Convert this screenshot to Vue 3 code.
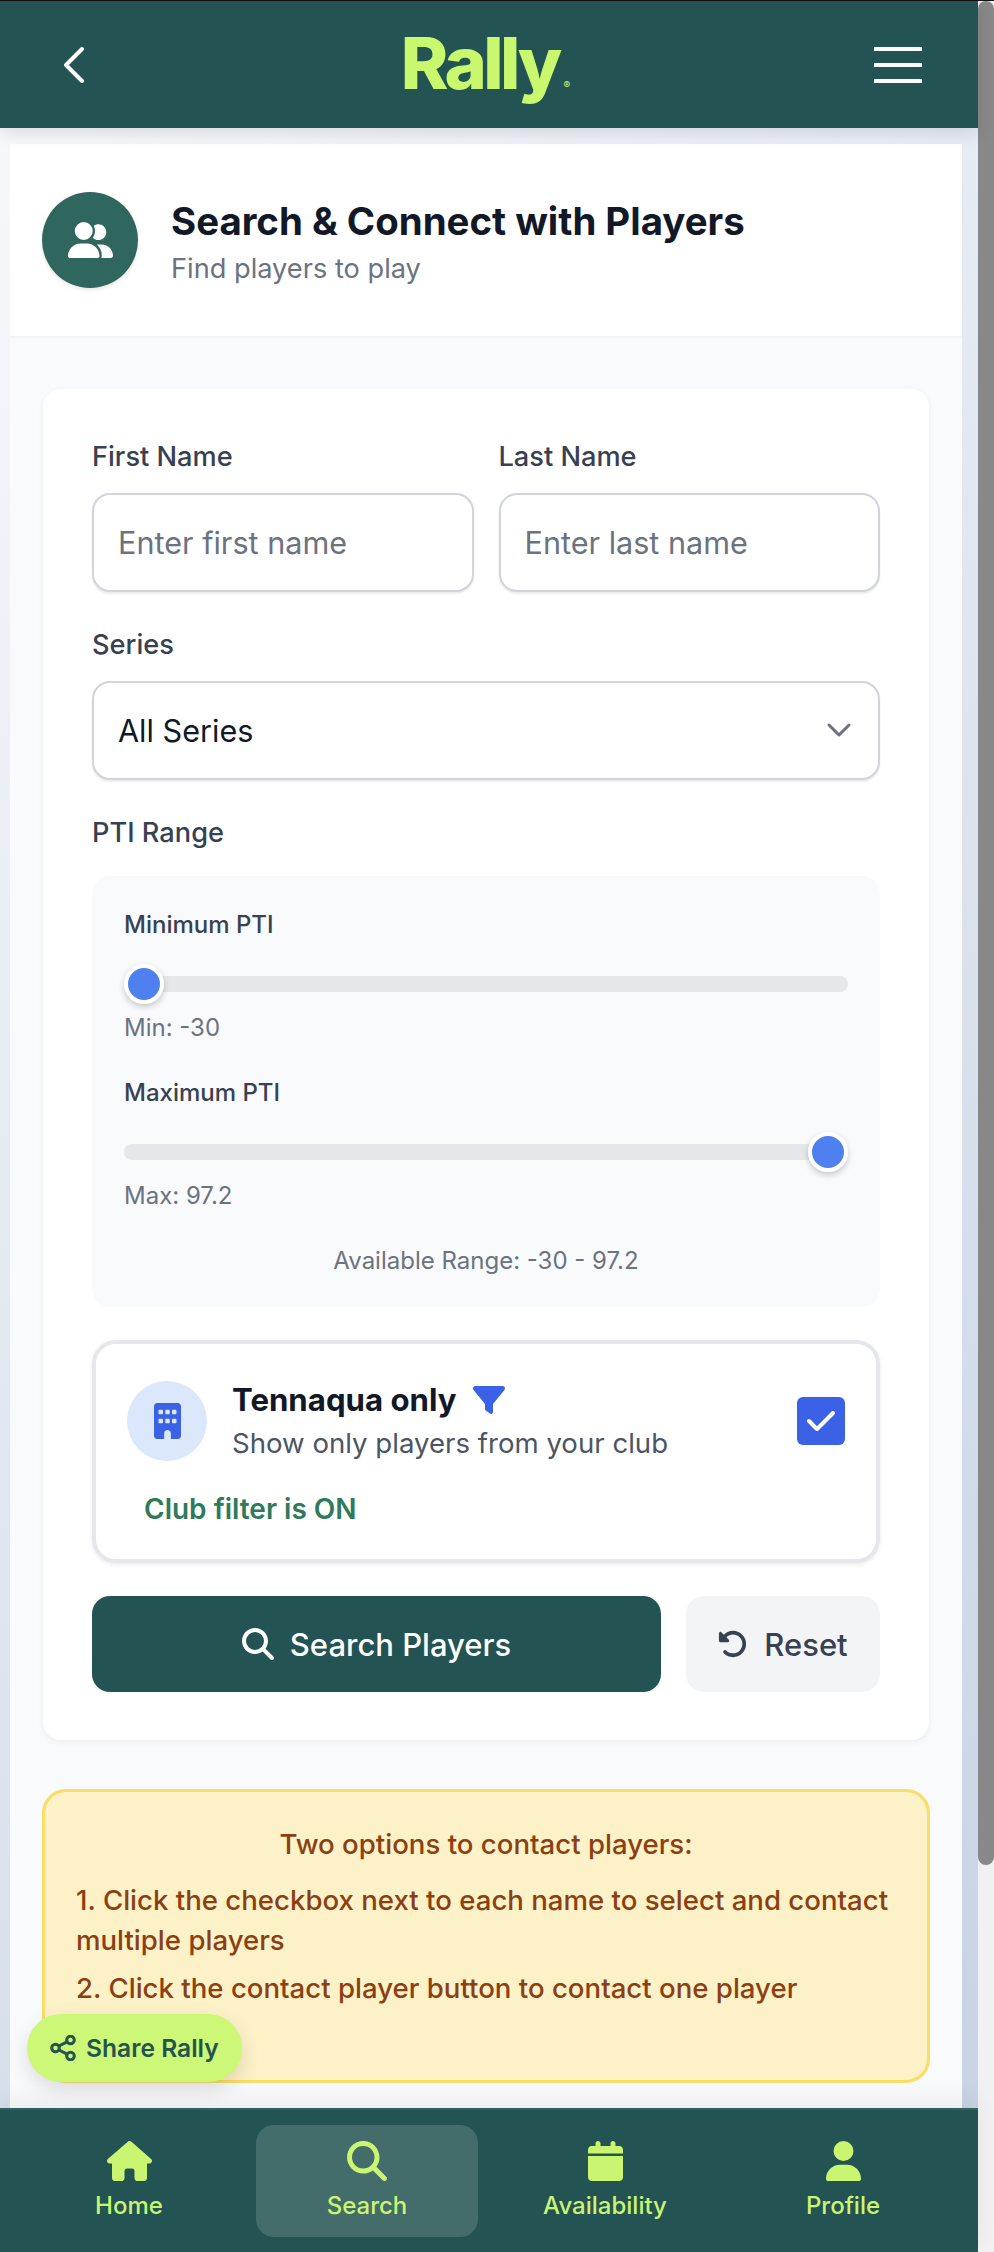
<template>
  <div class="screen">
    <div class="page">
      <header class="topbar">
        <button class="back" aria-label="Back">
          <svg viewBox="0 0 22 38" width="22" height="38" fill="none" stroke="#fff" stroke-width="4" stroke-linecap="round" stroke-linejoin="round">
            <path d="M19 3 3 19l16 16" />
          </svg>
        </button>
        <div class="logo">Rally<span class="reg">®</span></div>
        <button class="burger" aria-label="Menu"><i></i><i></i><i></i></button>
      </header>

      <main class="content">
        <section class="page-head">
          <div class="head-icon">
            <svg viewBox="0 0 640 512" width="45" height="36" fill="#fff"><path :d="icons.users" /></svg>
          </div>
          <div class="head-text">
            <h1>Search &amp; Connect with Players</h1>
            <p>Find players to play</p>
          </div>
        </section>

        <div class="body">
          <form class="card" @submit.prevent>
            <div class="name-row">
              <div>
                <label>First Name</label>
                <input v-model="firstName" type="text" placeholder="Enter first name">
              </div>
              <div>
                <label>Last Name</label>
                <input v-model="lastName" type="text" placeholder="Enter last name">
              </div>
            </div>

            <label class="spaced">Series</label>
            <div class="select-wrap">
              <select v-model="series">
                <option>All Series</option>
              </select>
              <svg class="chevron" viewBox="0 0 24 15" width="24" height="15" fill="none" stroke="#6b7280" stroke-width="3" stroke-linecap="round" stroke-linejoin="round">
                <path d="m2 2 10 10L22 2" />
              </svg>
            </div>

            <label class="spaced pti-label">PTI Range</label>
            <div class="range-box">
              <div class="range-title">Minimum PTI</div>
              <input v-model="minPti" type="range" min="-30" max="97.2" step="0.1">
              <div class="range-value">Min: {{ minPti }}</div>
              <div class="range-title second">Maximum PTI</div>
              <input v-model="maxPti" type="range" min="-30" max="97.2" step="0.1">
              <div class="range-value">Max: {{ maxPti }}</div>
              <div class="range-note">Available Range: -30 - 97.2</div>
            </div>

            <div class="club-box">
              <div class="club-row">
                <div class="club-icon">
                  <svg viewBox="0 0 384 512" width="27" height="36" fill="#3b62e6"><path :d="icons.building" /></svg>
                </div>
                <div class="club-text">
                  <div class="club-title">
                    Tennaqua only
                    <svg viewBox="0 0 512 512" width="32" height="32" fill="#3b62e6"><path :d="icons.filter" /></svg>
                  </div>
                  <div class="club-sub">Show only players from your club</div>
                </div>
                <button class="checkbox" type="button" @click="clubOnly = !clubOnly">
                  <svg v-if="clubOnly" viewBox="0 0 448 512" width="28" height="32" fill="#fff"><path :d="icons.check" /></svg>
                </button>
              </div>
              <div class="club-status">Club filter is {{ clubOnly ? 'ON' : 'OFF' }}</div>
            </div>

            <div class="actions">
              <button class="btn-search">
                <svg viewBox="0 0 512 512" width="32" height="32" fill="#fff"><path :d="icons.search" /></svg>
                Search Players
              </button>
              <button class="btn-reset" type="button">
                <svg viewBox="0 0 512 512" width="30" height="30" fill="#374151"><path :d="icons.undo" /></svg>
                Reset
              </button>
            </div>
          </form>

          <div class="notice">
            <div class="notice-title">Two options to contact players:</div>
            <p>1. Click the checkbox next to each name to select and contact multiple players</p>
            <p>2. Click the contact player button to contact one player</p>
          </div>
        </div>
      </main>

      <button class="share">
        <svg viewBox="0 0 26 26" width="26" height="26" fill="none" stroke="#23544f" stroke-width="3">
          <circle cx="5.5" cy="13" r="3.8" />
          <circle cx="20.5" cy="5" r="3.8" />
          <circle cx="20.5" cy="21" r="3.8" />
          <path d="m9 11 8-4.2M9 15l8 4.2" />
        </svg>
        Share Rally
      </button>

      <nav class="bottom-nav">
        <a v-for="item in navItems" :key="item.label" :class="{ active: item.active }">
          <svg :viewBox="item.box" height="40" fill="#c9f571"><path :d="item.d" /></svg>
          <span>{{ item.label }}</span>
        </a>
      </nav>
    </div>

    <div class="scrollbar"><div class="thumb"></div></div>
  </div>
</template>

<script setup>
import { ref } from 'vue';

const icons = {
  users: 'M96 128a128 128 0 1 1 256 0A128 128 0 1 1 96 128zM0 482.3C0 383.8 79.8 304 178.3 304h91.4C368.2 304 448 383.8 448 482.3c0 16.4-13.3 29.7-29.7 29.7H29.7C13.3 512 0 498.7 0 482.3zM609.3 512H471.4c5.4-9.4 8.6-20.3 8.6-32v-8c0-60.7-27.1-115.2-69.8-151.8c2.4-.1 4.7-.2 7.1-.2h61.4C567.8 320 640 392.2 640 481.3c0 17-13.8 30.7-30.7 30.7zM432 256c-31 0-59-12.6-79.3-32.9C372.4 196.5 384 163.6 384 128c0-26.8-6.6-52.1-18.3-74.3C384.3 40.1 407.2 32 432 32c61.9 0 112 50.1 112 112s-50.1 112-112 112z',
  building: 'M48 0C21.5 0 0 21.5 0 48V464c0 26.5 21.5 48 48 48h96V432c0-26.5 21.5-48 48-48s48 21.5 48 48v80h96c26.5 0 48-21.5 48-48V48c0-26.5-21.5-48-48-48H48zM64 240c0-8.8 7.2-16 16-16h32c8.8 0 16 7.2 16 16v32c0 8.8-7.2 16-16 16H80c-8.8 0-16-7.2-16-16V240zm112-16h32c8.8 0 16 7.2 16 16v32c0 8.8-7.2 16-16 16H176c-8.8 0-16-7.2-16-16V240c0-8.8 7.2-16 16-16zm80 16c0-8.8 7.2-16 16-16h32c8.8 0 16 7.2 16 16v32c0 8.8-7.2 16-16 16H272c-8.8 0-16-7.2-16-16V240zM80 96h32c8.8 0 16 7.2 16 16v32c0 8.8-7.2 16-16 16H80c-8.8 0-16-7.2-16-16V112c0-8.8 7.2-16 16-16zm80 16c0-8.8 7.2-16 16-16h32c8.8 0 16 7.2 16 16v32c0 8.8-7.2 16-16 16H176c-8.8 0-16-7.2-16-16V112zM272 96h32c8.8 0 16 7.2 16 16v32c0 8.8-7.2 16-16 16H272c-8.8 0-16-7.2-16-16V112c0-8.8 7.2-16 16-16z',
  filter: 'M3.9 54.9C10.5 40.9 24.5 32 40 32H472c15.5 0 29.5 8.9 36.1 22.9s4.6 30.5-5.2 42.5L320 320.9V448c0 12.1-6.8 23.2-17.7 28.6s-23.8 4.3-33.5-3l-64-48c-8.1-6-12.8-15.5-12.8-25.6V320.9L9 97.3C-.7 85.4-2.8 68.8 3.9 54.9z',
  check: 'M438.6 105.4c12.5 12.5 12.5 32.8 0 45.3l-256 256c-12.5 12.5-32.8 12.5-45.3 0l-128-128c-12.5-12.5-12.5-32.8 0-45.3s32.8-12.5 45.3 0L160 338.7 393.4 105.4c12.5-12.5 32.8-12.5 45.3 0z',
  search: 'M416 208c0 45.9-14.9 88.3-40 122.7L502.6 457.4c12.5 12.5 12.5 32.8 0 45.3s-32.8 12.5-45.3 0L330.7 376c-34.4 25.2-76.8 40-122.7 40C93.1 416 0 322.9 0 208S93.1 0 208 0S416 93.1 416 208zM208 352a144 144 0 1 0 0-288 144 144 0 1 0 0 288z',
  undo: 'M48.5 224H40c-13.3 0-24-10.7-24-24V72c0-9.7 5.8-18.5 14.8-22.2s19.3-1.7 26.2 5.2L98.6 96.6c87.6-86.5 228.7-86.2 315.8 1c87.5 87.5 87.5 229.3 0 316.8s-229.3 87.5-316.8 0c-12.5-12.5-12.5-32.8 0-45.3s32.8-12.5 45.3 0c62.5 62.5 163.8 62.5 226.3 0s62.5-163.8 0-226.3c-62.2-62.2-162.7-62.5-225.3-1L185 183c6.9 6.9 8.9 17.2 5.2 26.2s-12.5 14.8-22.2 14.8H48.5z'
};

const navItems = [
  { label: 'Home', box: '0 0 576 512', d: 'M575.8 255.5c0 18-15 32.1-32 32.1h-32l.7 160.2c0 2.7-.2 5.4-.5 8.1V472c0 22.1-17.9 40-40 40H456c-1.1 0-2.2 0-3.3-.1c-1.4 .1-2.8 .1-4.2 .1H416 392c-22.1 0-40-17.9-40-40V448 384c0-17.7-14.3-32-32-32H256c-17.7 0-32 14.3-32 32v64 24c0 22.1-17.9 40-40 40H160 128.1c-1.5 0-3-.1-4.5-.2c-1.2 .1-2.4 .2-3.6 .2H104c-22.1 0-40-17.9-40-40V360c0-.9 0-1.9 .1-2.8V287.6H32c-18 0-32-14-32-32.1c0-9 3-17 10-24L266.4 8c7-7 15-8 22-8s15 2 21 7L564.8 231.5c8 7 12 15 11 24z' },
  { label: 'Search', box: '0 0 512 512', d: icons.search, active: true },
  { label: 'Availability', box: '0 0 448 512', d: 'M96 32V64H48C21.5 64 0 85.5 0 112v48H448V112c0-26.5-21.5-48-48-48H352V32c0-17.7-14.3-32-32-32s-32 14.3-32 32V64H160V32c0-17.7-14.3-32-32-32S96 14.3 96 32zM448 192H0V464c0 26.5 21.5 48 48 48H400c26.5 0 48-21.5 48-48V192z' },
  { label: 'Profile', box: '0 0 448 512', d: 'M224 256A128 128 0 1 0 224 0a128 128 0 1 0 0 256zm-45.7 48C79.8 304 0 383.8 0 482.3C0 498.7 13.3 512 29.7 512H418.3c16.4 0 29.7-13.3 29.7-29.7C448 383.8 368.2 304 269.7 304H178.3z' }
];

const firstName = ref('');
const lastName = ref('');
const series = ref('All Series');
const minPti = ref(-30);
const maxPti = ref(97.2);
const clubOnly = ref(true);
</script>

<style>
html, body {
  margin: 0;
  background: #f1f1f1;
}
</style>

<style scoped>
.screen {
  display: flex;
  height: 2252px;
  overflow: hidden;
  font-family: Inter, "Noto Sans", sans-serif;
  color: #111827;
  border-top: 1px solid #111;
  box-sizing: border-box;
}

.page {
  position: relative;
  display: flex;
  flex-direction: column;
  flex: 1;
  min-width: 0;
  background: linear-gradient(135deg, #f8fafc 0%, #c6d1e3 100%);
}

.scrollbar {
  width: 16px;
  background: #f1f1f1;
}

.thumb {
  height: 1864px;
  background: #888;
  border-radius: 8px;
}

.topbar {
  position: relative;
  flex: none;
  display: flex;
  align-items: center;
  justify-content: space-between;
  height: 127px;
  padding: 0 56px 0 63px;
  background: #235352;
  box-shadow: 0 6px 16px rgba(0, 0, 0, 0.1);
}

.back,
.burger {
  padding: 0;
  background: none;
  border: none;
  line-height: 0;
}

.logo {
  position: relative;
  top: -2px;
  margin-left: 12px;
  font-size: 72px;
  font-weight: 800;
  line-height: 1;
  letter-spacing: -3.6px;
  color: #c9f86f;
}

.reg {
  font-size: 10px;
  font-weight: 400;
  letter-spacing: 0;
  margin-left: 5px;
}

.burger {
  display: flex;
  flex-direction: column;
  gap: 12px;
  width: 48px;
}

.burger i {
  display: block;
  height: 4px;
  background: #fff;
}

.content {
  flex: 1;
  margin: 16px 16px 0 10px;
  background: #f9fafc;
}

.page-head {
  display: flex;
  align-items: center;
  gap: 33px;
  height: 194px;
  padding: 0 32px;
  box-sizing: border-box;
  background: #fff;
  border-bottom: 2px solid #f3f4f6;
}

.head-icon {
  display: flex;
  align-items: center;
  justify-content: center;
  width: 96px;
  height: 96px;
  border-radius: 50%;
  background: #2f665e;
  box-shadow: 0 2px 4px rgba(0, 0, 0, 0.1);
}

.head-text {
  padding-top: 3px;
}

h1 {
  margin: 0;
  font-size: 38.4px;
  line-height: 48px;
  font-weight: 700;
}

.page-head p {
  margin: 6px 0 0;
  font-size: 27.2px;
  line-height: 36px;
  color: #6b7280;
}

.body {
  padding: 51px 32px 0;
}

.card {
  padding: 50px 49px 48px;
  margin: 0 1px;
  background: #fff;
  border-radius: 18px;
  box-shadow: 0 2px 6px rgba(0, 0, 0, 0.06);
}

.name-row {
  display: grid;
  grid-template-columns: 1fr 1fr;
  gap: 25px;
}

label {
  display: block;
  margin-bottom: 18px;
  font-size: 27.2px;
  line-height: 36px;
  font-weight: 500;
  color: #374151;
}

.spaced {
  margin-top: 35px;
}

.pti-label {
  margin-bottom: 25px;
}

input[type='text'],
select {
  display: block;
  box-sizing: border-box;
  width: 100%;
  height: 99px;
  padding: 0 24px;
  background: #fff;
  border: 2px solid #d1d5db;
  border-radius: 18px;
  box-shadow: 0 2px 2px rgba(0, 0, 0, 0.08);
  font-family: inherit;
  font-size: 30.6px;
  color: #111827;
  appearance: none;
}

input[type='text']::placeholder {
  color: #6b7280;
  opacity: 1;
}

.select-wrap {
  position: relative;
}

.chevron {
  position: absolute;
  top: 42px;
  right: 29px;
}

.range-box {
  padding: 33px 32px 30px;
  background: #f9fafb;
  border-radius: 18px;
}

.range-title,
.range-value {
  font-size: 24px;
  line-height: 32px;
  color: #374151;
  font-weight: 500;
}

.range-title.second {
  margin-top: 33px;
}

.range-value {
  margin-top: 20px;
  color: #6b7280;
  font-weight: 400;
}

.range-note {
  margin-top: 33px;
  font-size: 24px;
  line-height: 32px;
  color: #6b7280;
  text-align: center;
}

input[type='range'] {
  display: block;
  width: 100%;
  height: 16px;
  margin: 35px 0 0;
  background: #e5e7eb;
  border-radius: 8px;
  appearance: none;
}

input[type='range']::-webkit-slider-thumb {
  appearance: none;
  box-sizing: border-box;
  width: 40px;
  height: 40px;
  background: #4f80ef;
  border: 4px solid #fff;
  border-radius: 50%;
  box-shadow: 0 3px 6px rgba(0, 0, 0, 0.2);
}

.club-box {
  margin-top: 33px;
  padding: 36px 31px 32px;
  background: #fff;
  border: 4px solid #e5e7eb;
  border-radius: 24px;
  box-shadow: 0 2px 4px rgba(0, 0, 0, 0.08);
}

.club-row {
  display: flex;
  align-items: center;
  gap: 25px;
}

.club-icon {
  display: flex;
  align-items: center;
  justify-content: center;
  width: 80px;
  height: 80px;
  border-radius: 50%;
  background: #dbe7fb;
}

.club-text {
  flex: 1;
}

.club-title {
  display: flex;
  align-items: center;
  gap: 16px;
  font-size: 31.2px;
  line-height: 40px;
  font-weight: 700;
}

.club-sub {
  margin-top: 5px;
  font-size: 27.6px;
  line-height: 36px;
  color: #4b5563;
}

.checkbox {
  display: flex;
  align-items: center;
  justify-content: center;
  width: 48px;
  height: 48px;
  padding: 0;
  background: #3b62e6;
  border: none;
  border-radius: 6px;
}

.club-status {
  margin: 30px 0 0 17px;
  font-size: 28px;
  line-height: 36px;
  font-weight: 600;
  color: #2f7a5a;
}

.actions {
  display: flex;
  gap: 25px;
  margin-top: 33px;
}

.actions button {
  display: flex;
  align-items: center;
  justify-content: center;
  height: 96px;
  border: none;
  border-radius: 18px;
  font-family: inherit;
  font-size: 31px;
  font-weight: 500;
}

.btn-search {
  flex: 1;
  gap: 16px;
  background: #235352;
  color: #fff;
}

.btn-reset {
  width: 194px;
  gap: 16px;
  background: #f3f4f6;
  color: #374151;
}

.notice {
  margin-top: 49px;
  padding: 32px 31px 64px;
  background: #fcf1c7;
  border: 3px solid #fbdc66;
  border-radius: 24px;
  color: #8b3f12;
  font-size: 27.6px;
  line-height: 40px;
  font-weight: 500;
}

.notice-title {
  margin-bottom: 16px;
  text-align: center;
}

.notice p {
  margin: 0 0 8px;
}

.share {
  position: absolute;
  left: 27px;
  bottom: 170px;
  display: flex;
  align-items: center;
  gap: 10px;
  height: 68px;
  padding: 0 23px;
  background: #cdf776;
  border: none;
  border-radius: 34px;
  box-shadow: 0 8px 20px rgba(0, 0, 0, 0.12);
  font-family: inherit;
  font-size: 24.6px;
  font-weight: 600;
  color: #23544f;
}

.bottom-nav {
  position: absolute;
  left: 0;
  right: 0;
  bottom: 0;
  display: grid;
  grid-template-columns: repeat(4, 222px);
  column-gap: 16px;
  height: 144px;
  box-sizing: border-box;
  padding: 15px 0 0 18px;
  background: #235352;
  border-top: 2px solid #2f625f;
  box-shadow: 0 -8px 20px rgba(0, 0, 0, 0.06);
}

.bottom-nav a {
  display: flex;
  flex-direction: column;
  align-items: center;
  height: 112px;
  padding-top: 16px;
  box-sizing: border-box;
  border-radius: 18px;
  color: #c9f571;
  font-size: 24px;
  font-weight: 500;
}

.bottom-nav a.active {
  background: rgba(255, 255, 255, 0.15);
}

.bottom-nav span {
  margin-top: 7px;
  line-height: 36px;
}
</style>
